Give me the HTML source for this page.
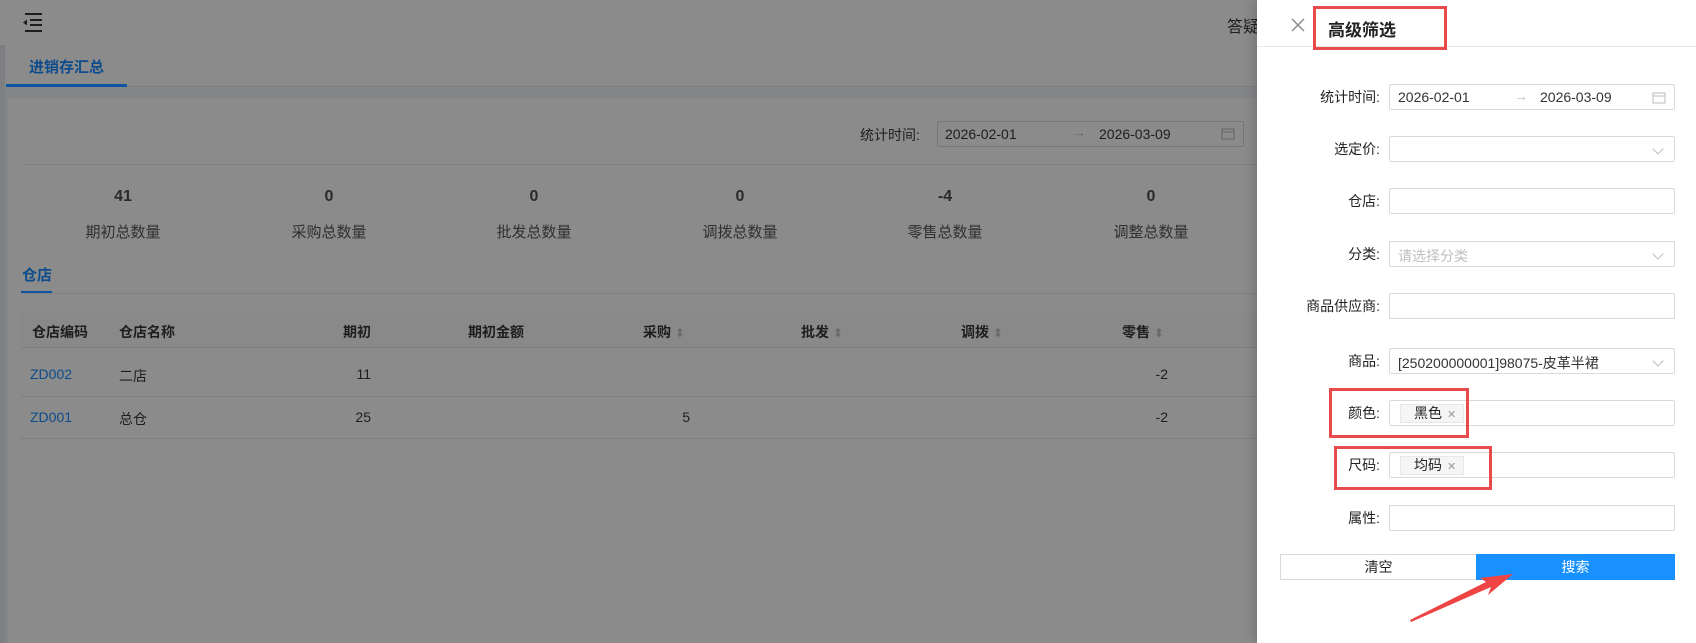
<!DOCTYPE html>
<html><head><meta charset="utf-8"><style>
*{box-sizing:border-box;margin:0;padding:0}
body{width:1696px;height:643px;overflow:hidden;position:relative;background:#848587;font-family:"Liberation Sans","Noto Sans CJK SC",sans-serif;font-size:14px;color:#333}
.a{position:absolute;white-space:nowrap}
.ov{color:#1e1e1e}
.inp{position:absolute;left:1389px;width:286px;height:26px;border:1px solid #d9d9d9;border-radius:2px;background:#fff}
.lbl{position:absolute;right:316px;width:200px;text-align:right;color:#222;font-size:14px;line-height:26px}
.chev{position:absolute;right:12px;top:8px;width:8px;height:8px;border-right:1px solid #bbb;border-bottom:1px solid #bbb;transform:rotate(45deg)}
.tag{position:absolute;left:10px;top:3px;width:64px;height:19px;background:#f5f5f5;border:1px solid #e8e8e8;font-size:14px;line-height:17px;padding-left:13px;color:#222}
.tag span{color:#999;font-size:11px;margin-left:5px}
.rb{position:absolute;border:3px solid #e84b4b}
.srt{color:#6b6b6b;font-size:12px;font-weight:normal}
</style></head><body>
<div class="a" style="left:0;top:0;width:1257px;height:45px;background:#8b8b8b;box-shadow:0 1px 3px rgba(0,0,0,.15)"></div>
<svg class="a" style="left:22px;top:12px" width="22" height="20"><g stroke="#1d1d1d" stroke-width="2"><line x1="3" y1="2" x2="20" y2="2"/><line x1="8" y1="8" x2="20" y2="8"/><line x1="8" y1="13" x2="20" y2="13"/><line x1="3" y1="19" x2="20" y2="19"/></g><path d="M1 10.5 L5 7.5 L5 13.5Z" fill="#1d1d1d"/></svg>
<div class="a ov" style="left:1227px;top:13px;font-size:16px">答疑</div>
<div class="a" style="left:0;top:45px;width:1257px;height:42px;background:#8b8b8b;border-bottom:1px solid #7d7d7d"></div>
<div class="a" style="left:29px;top:56px;color:#0d4c8c;font-size:15px;font-weight:bold">进销存汇总</div>
<div class="a" style="left:6px;top:84px;width:121px;height:3px;background:#0d55a0"></div>
<div class="a" style="left:8px;top:98px;width:1260px;height:545px;background:#8b8b8b"></div>
<div class="a ov" style="left:860px;top:125px">统计时间:</div>
<div class="a" style="left:937px;top:121px;width:307px;height:26px;border:1px solid #777;background:#8b8b8b;border-radius:2px"></div>
<div class="a ov" style="left:945px;top:126px">2026-02-01</div>
<div class="a" style="left:1072px;top:124px;color:#6a6a6a">→</div>
<div class="a ov" style="left:1099px;top:126px">2026-03-09</div>
<svg class="a" style="left:1221px;top:127px" width="14" height="13"><rect x="1" y="2" width="12" height="10" fill="none" stroke="#666"/><line x1="1" y1="5" x2="13" y2="5" stroke="#666"/></svg>
<div class="a" style="left:22px;top:164px;width:1240px;height:1px;background:#7f7f7f"></div>
<div class="a" style="left:23px;top:188px;width:1240px;font-size:16px;color:#2a2a2a;font-weight:bold">
<span class="a" style="left:0;width:200px;text-align:center">41</span><span class="a" style="left:206px;width:200px;text-align:center">0</span><span class="a" style="left:411px;width:200px;text-align:center">0</span><span class="a" style="left:617px;width:200px;text-align:center">0</span><span class="a" style="left:822px;width:200px;text-align:center">-4</span><span class="a" style="left:1028px;width:200px;text-align:center">0</span></div>
<div class="a" style="left:23px;top:221px;width:1240px;font-size:15px;color:#2f2f2f">
<span class="a" style="left:0;width:200px;text-align:center">期初总数量</span><span class="a" style="left:206px;width:200px;text-align:center">采购总数量</span><span class="a" style="left:411px;width:200px;text-align:center">批发总数量</span><span class="a" style="left:617px;width:200px;text-align:center">调拨总数量</span><span class="a" style="left:822px;width:200px;text-align:center">零售总数量</span><span class="a" style="left:1028px;width:200px;text-align:center">调整总数量</span></div>
<div class="a" style="left:22px;top:264px;color:#0d4c8c;font-size:15px;font-weight:bold">仓店</div>
<div class="a" style="left:22px;top:293px;width:1240px;height:1px;background:#7f7f7f"></div>
<div class="a" style="left:21px;top:291px;width:31px;height:2px;background:#0d55a0"></div>
<div class="a" style="left:21px;top:313px;width:1240px;height:35px;background:#898989;border-bottom:1px solid #7f7f7f"></div>
<div class="a" style="left:32px;top:322px;font-weight:bold;color:#1e1e1e">仓店编码</div>
<div class="a" style="left:119px;top:322px;font-weight:bold;color:#1e1e1e">仓店名称</div>
<div class="a" style="left:300px;width:71px;text-align:right;top:322px;font-weight:bold;color:#1e1e1e">期初</div>
<div class="a" style="left:468px;top:322px;font-weight:bold;color:#1e1e1e">期初金额</div>
<div class="a" style="left:643px;top:322px;font-weight:bold;color:#1e1e1e">采购 <span class="srt">⬍</span></div>
<div class="a" style="left:801px;top:322px;font-weight:bold;color:#1e1e1e">批发 <span class="srt">⬍</span></div>
<div class="a" style="left:961px;top:322px;font-weight:bold;color:#1e1e1e">调拨 <span class="srt">⬍</span></div>
<div class="a" style="left:1122px;top:322px;font-weight:bold;color:#1e1e1e">零售 <span class="srt">⬍</span></div>
<div class="a" style="left:21px;top:396px;width:1240px;height:1px;background:#7f7f7f"></div>
<div class="a" style="left:21px;top:438px;width:1240px;height:1px;background:#7f7f7f"></div>
<div class="a" style="left:30px;top:366px;color:#0d4c8c">ZD002</div><div class="a ov" style="left:119px;top:366px">二店</div><div class="a ov" style="left:300px;width:71px;text-align:right;top:366px">11</div><div class="a ov" style="left:1100px;width:68px;text-align:right;top:366px">-2</div>
<div class="a" style="left:30px;top:409px;color:#0d4c8c">ZD001</div><div class="a ov" style="left:119px;top:409px">总仓</div><div class="a ov" style="left:300px;width:71px;text-align:right;top:409px">25</div><div class="a ov" style="left:640px;width:50px;text-align:right;top:409px">5</div><div class="a ov" style="left:1100px;width:68px;text-align:right;top:409px">-2</div>
<div class="a" style="left:0;top:45px;width:5px;height:598px;background:#7e7f82"></div>
<div class="a" style="left:1257px;top:0;width:439px;height:643px;background:#fff;box-shadow:-4px 0 10px rgba(0,0,0,.15)"></div>
<div class="a" style="left:1257px;top:46px;width:439px;height:1px;background:#e8e8e8"></div>
<svg class="a" style="left:1291px;top:18px" width="14" height="14"><path d="M1 1L13 13M13 1L1 13" stroke="#888" stroke-width="1.4"/></svg>
<div class="a" style="left:1328px;top:16px;font-size:17px;font-weight:bold;color:#222">高级筛选</div>
<div class="rb" style="left:1313px;top:6px;width:134px;height:44px"></div>
<div class="lbl" style="top:84px">统计时间:</div>
<div class="inp" style="top:84px"><span class="a" style="left:8px;top:4px">2026-02-01</span><span class="a" style="left:124px;top:3px;color:#bbb">→</span><span class="a" style="left:150px;top:4px">2026-03-09</span><svg class="a" style="right:8px;top:6px" width="14" height="13"><rect x="1" y="2" width="12" height="10" fill="none" stroke="#bbb"/><line x1="1" y1="5" x2="13" y2="5" stroke="#bbb"/></svg></div>
<div class="lbl" style="top:136px">选定价:</div>
<div class="inp" style="top:136px"><i class="chev"></i></div>
<div class="lbl" style="top:188px">仓店:</div>
<div class="inp" style="top:188px"></div>
<div class="lbl" style="top:241px">分类:</div>
<div class="inp" style="top:241px"><span class="a" style="left:8px;top:4px;color:#bfbfbf">请选择分类</span><i class="chev"></i></div>
<div class="lbl" style="top:293px">商品供应商:</div>
<div class="inp" style="top:293px"></div>
<div class="lbl" style="top:348px">商品:</div>
<div class="inp" style="top:348px"><span class="a" style="left:8px;top:4px">[250200000001]98075-皮革半裙</span><i class="chev"></i></div>
<div class="lbl" style="top:400px">颜色:</div>
<div class="inp" style="top:400px"><div class="tag">黑色<span>✕</span></div></div>
<div class="lbl" style="top:452px">尺码:</div>
<div class="inp" style="top:452px"><div class="tag">均码<span>✕</span></div></div>
<div class="lbl" style="top:505px">属性:</div>
<div class="inp" style="top:505px"></div>
<div class="rb" style="left:1329px;top:388px;width:140px;height:50px"></div>
<div class="rb" style="left:1334px;top:446px;width:158px;height:44px"></div>
<div class="a" style="left:1280px;top:554px;width:197px;height:26px;border:1px solid #d9d9d9;text-align:center;line-height:24px;color:#222">清空</div>
<div class="a" style="left:1476px;top:554px;width:199px;height:26px;background:#1890ff;text-align:center;line-height:26px;color:#fff">搜索</div>
<svg class="a" style="left:1400px;top:565px" width="120" height="65"><path d="M11 57 L91 22 L88 30 L113 9 L80 13 L86 17 L10 55Z" fill="#ee4444"/></svg>
</body></html>
